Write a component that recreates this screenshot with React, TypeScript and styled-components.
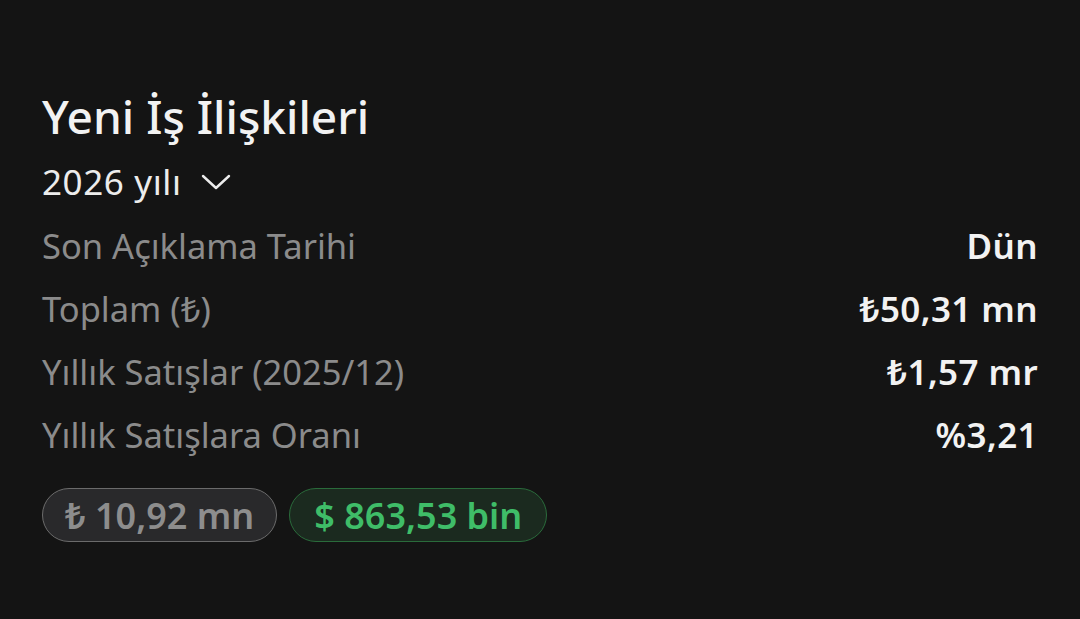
import styled, { createGlobalStyle } from "styled-components";

const GlobalStyle = createGlobalStyle`
  html, body {
    margin: 0;
    padding: 0;
    background: #141414;
  }
  body {
    font-family: "Noto Sans", "Open Sans", sans-serif;
    color: #f0f0f0;
  }
`;

const Card = styled.section`
  width: 1080px;
  height: 619px;
  box-sizing: border-box;
  padding: 84px 42px 0 42px;
  background: #141414;
`;

const Title = styled.h1`
  margin: 0;
  font-size: 46px;
  font-weight: 500;
  line-height: 64px;
  color: #f2f2f2;
`;

const YearPicker = styled.button`
  display: flex;
  align-items: center;
  gap: 19px;
  padding: 0;
  margin: 8px 0 0 0;
  background: none;
  border: none;
  color: #ececec;
  font-family: inherit;
  font-size: 35px;
  line-height: 52px;
  letter-spacing: 0.6px;
  cursor: pointer;
`;

const StatList = styled.dl`
  margin: 6px 0 0 0;
  display: flex;
  flex-direction: column;
`;

const StatRow = styled.div`
  display: flex;
  justify-content: space-between;
  align-items: center;
  height: 63px;
`;

const Label = styled.dt`
  font-size: 34.5px;
  color: #8b8b8b;
`;

const Value = styled.dd`
  margin: 0;
  font-size: 35px;
  font-weight: 600;
  letter-spacing: 0.4px;
  color: #f2f2f2;
`;

const Pills = styled.div`
  display: flex;
  gap: 12px;
  margin-top: 22px;
`;

const Pill = styled.span<{ $tone: "muted" | "green" }>`
  display: inline-flex;
  align-items: center;
  height: 54px;
  box-sizing: border-box;
  padding: 0 ${(p) => (p.$tone === "green" ? "24px" : "22px")};
  border-radius: 27px;
  font-size: 36px;
  font-weight: 600;
  background: ${(p) => (p.$tone === "green" ? "#1b2a1f" : "#29292b")};
  border: 1px solid ${(p) => (p.$tone === "green" ? "#2a6b3b" : "#6b6b6b")};
  color: ${(p) => (p.$tone === "green" ? "#3fbd68" : "#8d8d8d")};
`;

const stats = [
  { label: "Son Açıklama Tarihi", value: "Dün" },
  { label: "Toplam (₺)", value: "₺50,31 mn" },
  { label: "Yıllık Satışlar (2025/12)", value: "₺1,57 mr" },
  { label: "Yıllık Satışlara Oranı", value: "%3,21" },
];

function Chevron() {
  return (
    <svg width="30" height="18" viewBox="0 0 30 18" fill="none">
      <path d="M2 3l13 12L28 3" stroke="#ececec" strokeWidth="2.4" strokeLinecap="round" strokeLinejoin="round" />
    </svg>
  );
}

export default function App() {
  return (
    <>
      <GlobalStyle />
      <Card>
        <Title>Yeni İş İlişkileri</Title>
        <YearPicker>
          2026 yılı
          <Chevron />
        </YearPicker>
        <StatList>
          {stats.map((s) => (
            <StatRow key={s.label}>
              <Label>{s.label}</Label>
              <Value>{s.value}</Value>
            </StatRow>
          ))}
        </StatList>
        <Pills>
          <Pill $tone="muted">₺ 10,92 mn</Pill>
          <Pill $tone="green">$ 863,53 bin</Pill>
        </Pills>
      </Card>
    </>
  );
}
